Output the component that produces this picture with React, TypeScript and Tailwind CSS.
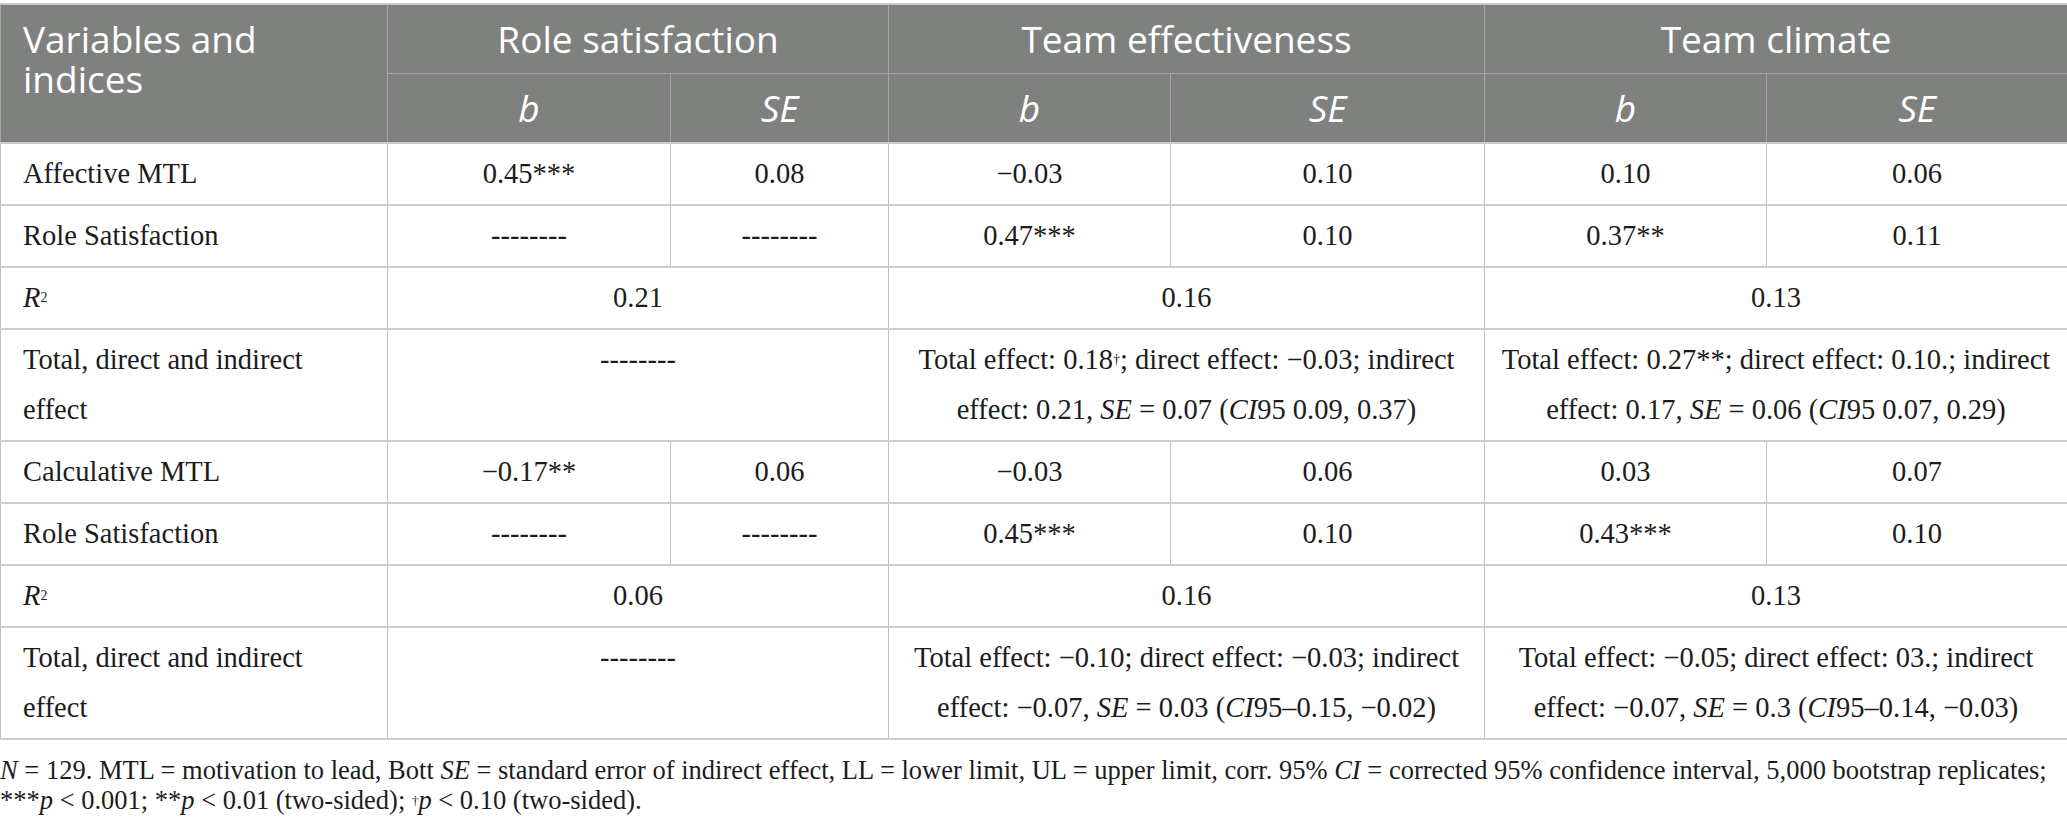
import type { ReactNode } from 'react'

const sans = { fontFamily: '"Open Sans", "Noto Sans", sans-serif' }
const serif = { fontFamily: '"Liberation Serif", "Times New Roman", serif' }

function Th({
  children,
  className = '',
  colSpan,
  rowSpan,
}: {
  children: ReactNode
  className?: string
  colSpan?: number
  rowSpan?: number
}) {
  return (
    <th
      colSpan={colSpan}
      rowSpan={rowSpan}
      className={`bg-[#7f817f] text-white font-normal text-[37px] leading-[40px] border border-[#a3a4a3] ${className}`}
    >
      {children}
    </th>
  )
}

function Td({ children, className = '', colSpan }: { children?: ReactNode; className?: string; colSpan?: number }) {
  return (
    <td
      colSpan={colSpan}
      className={`border-x border-x-[#c2c2c2] border-y-2 border-y-[#cbcbcb] py-[5px] leading-[50px] align-middle ${className}`}
    >
      {children}
    </td>
  )
}

const dash = '--------'

const R2 = (
  <>
    <i>R</i>
    <sup className="text-[14px] relative -top-[5px]">2</sup>
  </>
)

function Label({ children }: { children: ReactNode }) {
  return <Td className="text-left pl-[22px] pr-4 whitespace-nowrap">{children}</Td>
}

function ValueRow({ label, vals }: { label: ReactNode; vals: ReactNode[] }) {
  return (
    <tr>
      <Label>{label}</Label>
      {vals.map((v, i) => (
        <Td key={i} className="text-center">
          {v}
        </Td>
      ))}
    </tr>
  )
}

function SpanRow({ label, vals, top = false }: { label: ReactNode; vals: ReactNode[]; top?: boolean }) {
  return (
    <tr>
      <Label>{label}</Label>
      {vals.map((v, i) => (
        <Td key={i} colSpan={2} className={`text-center whitespace-nowrap ${top ? 'align-top' : ''}`}>
          {v}
        </Td>
      ))}
    </tr>
  )
}

const dag = <sup className="text-[14px] relative -top-[5px]">†</sup>
const minus = '\u2212'
const ndash = '\u2013'

const effectLabel = (
  <>
    Total, direct and indirect
    <br />
    effect
  </>
)

export default function App() {
  return (
    <div className="w-[2067px] min-h-[828px] bg-white pt-[3px] text-[#1c1c1c]">
      <table className="w-[2067px] table-fixed border-collapse border-t-2 border-t-[#c8c8c8]">
        <colgroup>
          <col className="w-[387px]" />
          <col className="w-[283px]" />
          <col className="w-[218px]" />
          <col className="w-[282px]" />
          <col className="w-[314px]" />
          <col className="w-[282px]" />
          <col className="w-[301px]" />
        </colgroup>
        <thead style={sans}>
          <tr>
            <Th rowSpan={2} className="text-left align-top pl-[22px] pt-[14px]">
              Variables and
              <br />
              indices
            </Th>
            <Th colSpan={2} className="text-center py-[14px]">
              Role satisfaction
            </Th>
            <Th colSpan={2} className="text-center py-[14px]">
              Team effectiveness
            </Th>
            <Th colSpan={2} className="text-center py-[14px]">
              Team climate
            </Th>
          </tr>
          <tr>
            {['b', 'SE', 'b', 'SE', 'b', 'SE'].map((t, i) => (
              <Th key={i} className="text-center italic py-[14px]">
                {t}
              </Th>
            ))}
          </tr>
        </thead>
        <tbody style={serif} className="text-[28.5px]">
          <ValueRow label="Affective MTL" vals={['0.45***', '0.08', `${minus}0.03`, '0.10', '0.10', '0.06']} />
          <ValueRow label="Role Satisfaction" vals={[dash, dash, '0.47***', '0.10', '0.37**', '0.11']} />
          <SpanRow label={R2} vals={['0.21', '0.16', '0.13']} />
          <SpanRow
            label={effectLabel}
            top
            vals={[
              dash,
              <>
                Total effect: 0.18{dag}; direct effect: {minus}0.03; indirect
                <br />
                effect: 0.21, <i>SE</i> = 0.07 (<i>CI</i>95 0.09, 0.37)
              </>,
              <>
                Total effect: 0.27**; direct effect: 0.10.; indirect
                <br />
                effect: 0.17, <i>SE</i> = 0.06 (<i>CI</i>95 0.07, 0.29)
              </>,
            ]}
          />
          <ValueRow label="Calculative MTL" vals={[`${minus}0.17**`, '0.06', `${minus}0.03`, '0.06', '0.03', '0.07']} />
          <ValueRow label="Role Satisfaction" vals={[dash, dash, '0.45***', '0.10', '0.43***', '0.10']} />
          <SpanRow label={R2} vals={['0.06', '0.16', '0.13']} />
          <SpanRow
            label={effectLabel}
            top
            vals={[
              dash,
              <>
                Total effect: {minus}0.10; direct effect: {minus}0.03; indirect
                <br />
                effect: {minus}0.07, <i>SE</i> = 0.03 (<i>CI</i>95{ndash}0.15, {minus}0.02)
              </>,
              <>
                Total effect: {minus}0.05; direct effect: 03.; indirect
                <br />
                effect: {minus}0.07, <i>SE</i> = 0.3 (<i>CI</i>95{ndash}0.14, {minus}0.03)
              </>,
            ]}
          />
        </tbody>
      </table>
      <div style={serif} className="mt-[15px] text-[26.5px] leading-[30px] whitespace-nowrap">
        <div>
          <i>N</i> = 129. MTL = motivation to lead, Bott <i>SE</i> = standard error of indirect effect, LL = lower limit,
          UL = upper limit, corr. 95% <i>CI</i> = corrected 95% confidence interval, 5,000 bootstrap replicates;
        </div>
        <div>
          ***<i>p</i> &lt; 0.001; **<i>p</i> &lt; 0.01 (two-sided);{' '}
          <sup className="text-[13px] relative -top-[4px]">†</sup>
          <i>p</i> &lt; 0.10 (two-sided).
        </div>
      </div>
    </div>
  )
}
